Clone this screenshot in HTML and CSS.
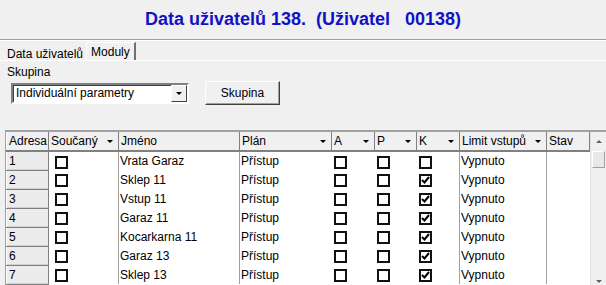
FILE: index.html
```html
<!DOCTYPE html>
<html lang="cs">
<head>
    <meta charset="UTF-8">
    <title>Data uživatelů</title>
    <link rel="stylesheet" href="styles.css">
</head>
<body>
    <div class="title">Data uživatelů 138.&nbsp; (Uživatel &nbsp; 00138)</div>

    <div class="tabs">
        <div class="tab">Data uživatelů</div>
        <div class="tab active">Moduly</div>
    </div>

    <div class="panel">
        <div class="label">Skupina</div>
        <div class="group-row">
            <div class="select">
                <span>Individuální parametry</span>
                <span class="select-btn"><i class="arrow"></i></span>
            </div>
            <button class="btn">Skupina</button>
        </div>

        <div class="grid">
            <table>
                <colgroup>
                    <col style="width:42px">
                    <col style="width:70px">
                    <col style="width:121px">
                    <col style="width:92px">
                    <col style="width:43px">
                    <col style="width:42px">
                    <col style="width:43px">
                    <col style="width:87px">
                    <col style="width:43px">
                </colgroup>
                <thead>
                    <tr>
                        <th>Adresa</th>
                        <th class="dd">Součaný</th>
                        <th>Jméno</th>
                        <th class="dd">Plán</th>
                        <th class="dd">A</th>
                        <th class="dd">P</th>
                        <th class="dd">K</th>
                        <th class="dd">Limit vstupů</th>
                        <th>Stav</th>
                    </tr>
                </thead>
                <tbody id="rows"></tbody>
            </table>
            <div class="scrollbar">
                <div class="sb-btn"><i class="up"></i></div>
                <div class="thumb"></div>
                <div class="sb-track"></div>
                <div class="sb-btn flat"><i class="down"></i></div>
            </div>
        </div>
    </div>

    <script>
        const users = [
            { n: "Vrata Garaz", k: false },
            { n: "Sklep 11", k: true },
            { n: "Vstup 11", k: true },
            { n: "Garaz 11", k: true },
            { n: "Kocarkarna 11", k: true },
            { n: "Garaz 13", k: true },
            { n: "Sklep 13", k: true }
        ];

        function box(checked) {
            let mark = checked ? '<svg viewBox="0 0 9 9" width="9" height="9"><polyline points="1,4 3.5,6.5 8,1" fill="none" stroke="#000" stroke-width="2"/></svg>' : '';
            return '<span class="cb">' + mark + '</span>';
        }

        let html = '';
        users.forEach((u, i) => {
            html += '<tr>' +
                '<td class="addr">' + (i + 1) + '</td>' +
                '<td class="chk first sep">' + box(false) + '</td>' +
                '<td class="sep">' + u.n + '</td>' +
                '<td>Přístup</td>' +
                '<td class="chk">' + box(false) + '</td>' +
                '<td class="chk">' + box(false) + '</td>' +
                '<td class="chk sep">' + box(u.k) + '</td>' +
                '<td class="sep">Vypnuto</td>' +
                '<td></td>' +
                '</tr>';
        });
        document.getElementById('rows').innerHTML = html;
    </script>
</body>
</html>
```

FILE: styles.css
```css
* {
    box-sizing: border-box;
    margin: 0;
    padding: 0;
}

body {
    font-family: 'Liberation Sans', Arial, sans-serif;
    font-size: 12px;
    background: #f0f0f0;
    color: #000;
    width: 606px;
    height: 285px;
    overflow: hidden;
}

.title {
    height: 40px;
    line-height: 39px;
    text-align: center;
    font-size: 18px;
    font-weight: bold;
    color: #1212c4;
    border-bottom: 1px solid #a0a0a0;
    box-shadow: 0 1px 0 #fff;
}

.tabs {
    display: flex;
    padding: 2px 0 0 4px;
    height: 21px;
    border-bottom: 1px solid #fff;
}

.tab {
    padding: 3px 3px 0 3px;
    margin-top: 2px;
}

.tab.active {
    margin-top: 0;
    padding: 2px 4px 0 4px;
    border-left: 1px solid #fff;
    border-top: 1px solid #fff;
    border-right: 2px solid #707070;
}

.panel {
    padding: 4px 0 0 5px;
}

.label {
    padding-left: 2px;
    height: 16px;
}

.group-row {
    display: flex;
    align-items: center;
    gap: 16px;
    padding-left: 6px;
    height: 24px;
}

.select {
    width: 178px;
    height: 21px;
    display: flex;
    align-items: center;
    justify-content: space-between;
    background: #fff;
    border: 2px solid;
    border-color: #808080 #fff #fff #808080;
    box-shadow: inset 1px 1px 0 #404040;
    padding-left: 3px;
}

.select-btn {
    width: 16px;
    height: 17px;
    background: #f0f0f0;
    border: 1px solid;
    border-color: #fff #404040 #404040 #fff;
    display: flex;
    align-items: center;
    justify-content: center;
}

.arrow,
.dd::after {
    border-left: 3px solid transparent;
    border-right: 3px solid transparent;
    border-top: 3px solid #000;
}

.btn {
    width: 75px;
    height: 24px;
    font-family: inherit;
    font-size: 12px;
    background: #f0f0f0;
    border: 1px solid;
    border-color: #fff #404040 #404040 #fff;
    box-shadow: inset -1px -1px 0 #a0a0a0;
}

.grid {
    display: flex;
    margin-top: 25px;
    border-top: 2px solid #a0a0a0;
    border-left: 1px solid #a0a0a0;
    background: #fff;
    height: 160px;
}

table {
    border-collapse: collapse;
    table-layout: fixed;
    width: 583px;
    align-self: flex-start;
}

th {
    height: 19px;
    font-weight: normal;
    text-align: left;
    padding-left: 2px;
    background: #f0f0f0;
    border-right: 1px solid #808080;
    border-bottom: 2px solid #808080;
    border-left: 1px solid #fff;
    position: relative;
}

.dd::after {
    content: "";
    position: absolute;
    right: 5px;
    top: 8px;
}

td {
    height: 19px;
    padding-left: 1px;
    white-space: nowrap;
}

td.sep {
    border-right: 1px solid #a0a0a0;
}

td.addr {
    background: #ececec;
    border: 1px solid;
    border-color: #fff #808080 #808080 #fff;
    box-shadow: inset 0 -1px 0 #d0d0d0;
    padding-left: 2px;
}

td.chk {
    padding-left: 2px;
}

td.chk.first {
    padding-left: 6px;
}

.cb {
    display: flex;
    align-items: center;
    justify-content: center;
    width: 13px;
    height: 13px;
    border: 2px solid #111;
    background: #fff;
    margin-top: 2px;
}

.scrollbar {
    width: 18px;
    display: flex;
    flex-direction: column;
    background: #f0f0f0;
    border-left: 1px solid #e0e0e0;
}

.sb-btn {
    height: 18px;
    display: flex;
    align-items: center;
    justify-content: center;
}

.up {
    border-left: 3px solid transparent;
    border-right: 3px solid transparent;
    border-bottom: 3px solid #606060;
}

.down {
    border-left: 3px solid transparent;
    border-right: 3px solid transparent;
    border-top: 3px solid #606060;
}

.thumb {
    height: 17px;
    margin: 1px 1px 0 1px;
    background: #e8e8e8;
    border: 1px solid;
    border-color: #fff #a0a0a0 #a0a0a0 #fff;
}

.sb-track {
    flex: 1;
}
```
